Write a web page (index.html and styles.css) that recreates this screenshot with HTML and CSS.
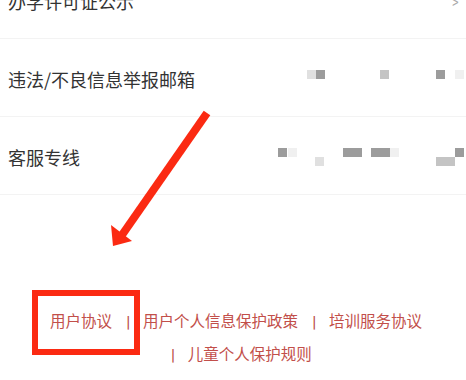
FILE: index.html
```html
<!DOCTYPE html>
<html lang="zh-CN">
<head>
    <meta charset="UTF-8">
    <meta name="viewport" content="width=device-width, initial-scale=1.0">
    <title>关于我们</title>
    <link rel="stylesheet" href="styles.css">
</head>
<body>
    <ul class="menu">
        <li class="menu-row">
            <span class="menu-label">办学许可证公示</span>
            <span class="chevron">&gt;</span>
        </li>
        <li class="menu-row">
            <span class="menu-label">违法/不良信息举报邮箱</span>
            <span class="blur">
                <i class="px lt" style="left:39px;top:0"></i>
                <i class="px dk" style="left:48px;top:0"></i>
                <i class="px md" style="left:112px;top:0"></i>
                <i class="px dk" style="left:168px;top:0"></i>
                <i class="px fa" style="left:187px;top:0"></i>
            </span>
        </li>
        <li class="menu-row">
            <span class="menu-label">客服专线</span>
            <span class="blur">
                <i class="px dk" style="left:10px;top:0"></i>
                <i class="px fa" style="left:20px;top:0"></i>
                <i class="px lt" style="left:47px;top:9px"></i>
                <i class="px dk wide" style="left:75px;top:0"></i>
                <i class="px dk wide" style="left:103px;top:0"></i>
                <i class="px fa" style="left:122px;top:0"></i>
                <i class="px md wide" style="left:168px;top:9px"></i>
                <i class="px dk" style="left:187px;top:0"></i>
            </span>
        </li>
    </ul>

    <footer class="links">
        <span class="item"><a href="#">用户协议</a></span>
        <span class="item"><i class="sep">|</i><a href="#">用户个人信息保护政策</a></span>
        <span class="item"><i class="sep">|</i><a href="#">培训服务协议</a></span>
        <span class="item"><i class="sep">|</i><a href="#">儿童个人保护规则</a></span>
    </footer>

    <!-- annotation -->
    <div class="mark-box"></div>
    <svg class="mark-arrow" width="466" height="380" viewBox="0 0 466 380">
        <line x1="207" y1="113" x2="122" y2="235" stroke="#fb2a12" stroke-width="8" stroke-linecap="butt"/>
        <polygon points="113,246 111,225 132,241" fill="#fb2a12"/>
    </svg>
</body>
</html>
```

FILE: styles.css
```css
body {
    margin: 0;
    background-color: #fff;
    font-family: "Noto Sans CJK SC", "Noto Sans", sans-serif;
    overflow: hidden;
}

.menu {
    list-style: none;
    margin: -39px 0 0 0;
    padding: 0;
}

.menu-row {
    box-sizing: border-box;
    display: flex;
    align-items: center;
    justify-content: space-between;
    height: 78px;
    padding: 3px 8px 0 8px;
    border-bottom: 1px solid #f3f3f3;
}

.menu-label {
    font-size: 18px;
    color: #333;
}

.chevron {
    font-size: 16px;
    color: #aaa;
    transform: scaleX(0.7);
    margin-right: -2px;
}

.blur {
    position: relative;
    width: 196px;
    height: 18px;
    margin-right: -6px;
}

.px {
    position: absolute;
    width: 9px;
    height: 9px;
}

.px.wide {
    width: 19px;
}

.dk { background-color: #9c9c9c; }
.md { background-color: #c4c4c4; }
.lt { background-color: #e0e0e0; }
.fa { background-color: #f0f0f0; }

.links {
    padding: 109px 0 0 6px;
    text-align: center;
    font-size: 15.5px;
    line-height: 33px;
}

.item {
    white-space: nowrap;
}

.links a {
    color: #c24f4a;
    text-decoration: none;
}

.sep {
    font-style: normal;
    font-size: 12px;
    font-weight: bold;
    color: #b8443f;
    vertical-align: 1px;
    margin: 0 13px 0 11px;
}

.mark-box {
    position: absolute;
    left: 32px;
    top: 290px;
    width: 96px;
    height: 53px;
    border: 6px solid #fb2a12;
}

.mark-arrow {
    position: absolute;
    left: 0;
    top: 0;
}
```
